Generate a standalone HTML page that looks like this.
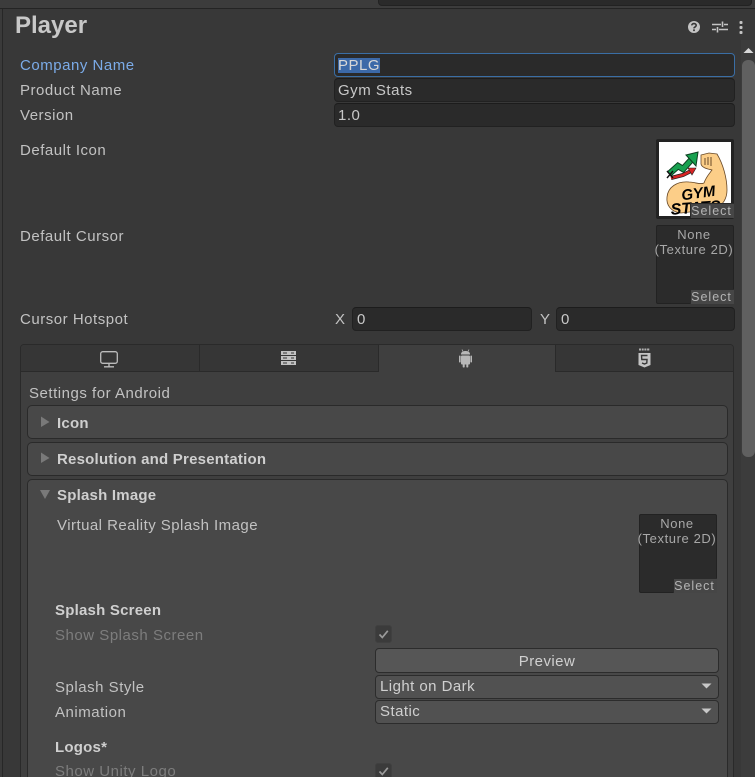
<!DOCTYPE html>
<html><head><meta charset="utf-8"><title>Player</title>
<style>
html,body{margin:0;padding:0;background:#383838}
#r{position:relative;width:755px;height:777px;overflow:hidden;background:#383838;font-family:"Liberation Sans",sans-serif;font-size:15px;letter-spacing:.52px;color:#c2c2c2}
#r div{position:absolute;box-sizing:border-box}
.t{white-space:nowrap;line-height:18px;height:18px}
.b{font-weight:bold;color:#cfcfcf;letter-spacing:.22px}
.f{background:#2a2a2a;border:1px solid #212121;border-top-color:#1c1c1c;border-radius:4px;height:24px;padding:3px 0 0 3px;line-height:18px;color:#c8c8c8}
.s{width:44px;height:15px;background:#464646;border-left:1px solid #2b2b2b;border-top:1px solid #2b2b2b;font-size:12.5px;line-height:14px;text-align:center;color:#b4b4b4;letter-spacing:1px;padding-right:2px}
.o{width:78px;height:79px;background:#2b2b2b;border:1px solid #222;border-radius:2px}
.n{color:#a8a8a8;font-size:13px;letter-spacing:.6px;text-align:center;line-height:15px;white-space:nowrap}
.fold{left:27px;width:701px;background:#484848;border:1px solid #2a2a2a;border-radius:5px}
.dd{left:375px;width:344px;height:24px;background:#515151;border:1px solid #2c2c2c;border-radius:4px;padding:2px 0 0 4px;line-height:18px;color:#d0d0d0;letter-spacing:.45px}
.cb{left:375px;width:17px;height:18px;background:#3b3b3b;border:1px solid #404040;border-radius:3px}
.dis{color:#7d7d7d}
</style></head>
<body><div id="r">
<!-- top strip -->
<div style="left:0;top:0;width:755px;height:9px;background:#3c3c3c;border-bottom:1px solid #242424"></div>
<div style="left:378px;top:-6px;width:374px;height:12px;background:#2a2a2a;border:1px solid #222;border-radius:4px"></div>
<div style="left:0;top:9px;width:2px;height:768px;background:#3a3a3a"></div>
<div style="left:2px;top:9px;width:1px;height:768px;background:#272727"></div>
<!-- scrollbar -->
<div style="left:741px;top:40px;width:14px;height:737px;background:#3c3c3c"></div>
<div style="left:742px;top:60px;width:13px;height:397px;background:#606060;border-radius:6px"></div>
<svg style="position:absolute;left:743px;top:47px" width="12" height="7"><path d="M0.500 6L5.500 1L10.500 6Z" fill="#d8d8d8"/></svg>
<!-- header -->
<div class="t" style="left:15px;top:13px;font-size:24px;line-height:26px;height:26px;font-weight:bold;color:#c8c8c8;letter-spacing:0">Player</div>
<svg style="position:absolute;left:686px;top:19px" width="64" height="16">
<circle cx="8" cy="8" r="6" fill="#c4c4c4"/>
<path d="M5.800 6.400C5.800 4 10.200 4 10.200 6.400C10.200 8 8 7.800 8 9.400" stroke="#383838" stroke-width="1.600" fill="none"/><rect x="7.100" y="10.400" width="1.800" height="1.700" fill="#383838"/>
<path d="M26 5.500H35M38 5.500H42M26 10.500H30M33 10.500H42" stroke="#c4c4c4" stroke-width="1.400"/>
<path d="M36.500 2.500V8M31.500 8V13.500" stroke="#c4c4c4" stroke-width="1.600"/>
<rect x="53.500" y="2" width="3" height="3" rx="1" fill="#c4c4c4"/><rect x="53.500" y="7" width="3" height="3" rx="1" fill="#c4c4c4"/><rect x="53.500" y="12" width="3" height="3" rx="1" fill="#c4c4c4"/>
</svg>
<!-- fields -->
<div class="t" style="left:20px;top:57px;color:#7babe8">Company Name</div>
<div class="t" style="left:20px;top:82px">Product Name</div>
<div class="t" style="left:20px;top:107px">Version</div>
<div class="f" style="left:334px;top:53px;width:401px;border:1px solid #3a6ea5"><span style="background:#3c69a8;color:#d8d8d8;display:inline-block;height:15px;line-height:15px">PPLG</span></div>
<div class="f" style="left:334px;top:78px;width:401px">Gym Stats</div>
<div class="f" style="left:334px;top:103px;width:401px">1.0</div>
<div class="t" style="left:20px;top:142px">Default Icon</div>
<div class="t" style="left:20px;top:228px">Default Cursor</div>
<!-- icon -->
<div class="o" style="left:656px;top:139px;height:80px;background:#222"></div>
<svg style="position:absolute;left:659px;top:142px" width="72" height="74" viewBox="0 0 72 74">
<rect width="72" height="74" fill="#fff"/>
<path d="M42 13L50 11L58 12C64 22 68 36 68 48C68 57 64 63 56 67L22 71C12 70 7 63 8 55C9 45 18 39 30 40C36 40 41 43 45 41C47 35 50 32 53 28C49 27 43 26 42 22Z" fill="#fcce88" stroke="#6a4a28" stroke-width=".8"/>
<path d="M46 16V23M49 15V23M52 15V24" stroke="#5a3d20" stroke-width=".9"/>
<path d="M10 32L19 24L24 27L33 17" stroke="#0c3f20" stroke-width="6.500" fill="none"/>
<path d="M10 32L19 24L24 27L33 17" stroke="#18a150" stroke-width="4.500" fill="none"/>
<path d="M27 13L39 10L37 24Z" fill="#18a150" stroke="#0c3f20" stroke-width="1"/>
<path d="M12 36L24 33L32 29" stroke="#222" stroke-width="4" fill="none"/>
<path d="M12 36L24 33L32 29" stroke="#d82424" stroke-width="2.600" fill="none"/>
<path d="M29 26L37 26L33 33Z" fill="#d82424" stroke="#222" stroke-width=".6"/>
<path d="M8 29L14 36M14 29L8 36" stroke="#111" stroke-width="1.400"/>
<text x="40" y="56" text-anchor="middle" font-family="Liberation Sans,sans-serif" font-size="15" font-weight="bold" font-style="italic" fill="#000" letter-spacing="0" transform="rotate(-8 40 56)">GYM</text>
<text x="37" y="71" text-anchor="middle" font-family="Liberation Sans,sans-serif" font-size="16" font-weight="bold" font-style="italic" fill="#000" letter-spacing="0" transform="rotate(-4 37 71)">STATS</text>
</svg>
<div class="s" style="left:690px;top:203px">Select</div>
<!-- cursor -->
<div class="o" style="left:656px;top:225px"></div>
<div class="n" style="left:653px;top:227px;width:82px">None<br>(Texture 2D)</div>
<div class="s" style="left:690px;top:289px">Select</div>
<!-- hotspot -->
<div class="t" style="left:20px;top:311px">Cursor Hotspot</div>
<div class="t" style="left:335px;top:311px">X</div>
<div class="f" style="left:352px;top:307px;width:180px;padding-left:4px">0</div>
<div class="t" style="left:540px;top:311px">Y</div>
<div class="f" style="left:556px;top:307px;width:179px;padding-left:4px">0</div>
<!-- tab box -->
<div style="left:20px;top:344px;width:714px;height:440px;background:#3f3f3f;border:1px solid #2a2a2a;border-radius:4px 4px 0 0"></div>
<div style="left:21px;top:345px;width:179px;height:27px;background:#363636;border-bottom:1px solid #2a2a2a;border-right:1px solid #2a2a2a;border-radius:3px 0 0 0"></div>
<div style="left:200px;top:345px;width:179px;height:27px;background:#363636;border-bottom:1px solid #2a2a2a;border-right:1px solid #2a2a2a"></div>
<div style="left:555px;top:345px;width:178px;height:27px;background:#363636;border-bottom:1px solid #2a2a2a;border-left:1px solid #2a2a2a;border-radius:0 3px 0 0"></div>
<svg style="position:absolute;left:0;top:344px" width="755" height="28">
<rect x="100.700" y="7.700" width="16.600" height="11.600" rx="2" fill="none" stroke="#bcbcbc" stroke-width="1.300"/>
<path d="M109 19.500V22.500M104 22.800H114" stroke="#bcbcbc" stroke-width="1.400"/>
<g fill="#c2c2c2"><rect x="281" y="7" width="15" height="4"/><rect x="281" y="12" width="15" height="4"/><rect x="281" y="17" width="15" height="4"/></g>
<g fill="#363636"><rect x="283" y="8.500" width="4" height="1"/><rect x="291" y="8.500" width="3" height="1"/><rect x="283" y="13.500" width="4" height="1"/><rect x="291" y="13.500" width="3" height="1"/><rect x="283" y="18.500" width="4" height="1"/><rect x="291" y="18.500" width="3" height="1"/></g>
<g fill="#b8b8b8"><path d="M461 10C461 6 470 6 470 10V10.500H461Z"/><rect x="461" y="11.500" width="9" height="9" rx="1"/><rect x="459" y="11.500" width="1.600" height="7" rx=".8"/><rect x="470.400" y="11.500" width="1.600" height="7" rx=".8"/><rect x="462.700" y="20" width="2" height="3.500" rx=".8"/><rect x="466.300" y="20" width="2" height="3.500" rx=".8"/></g>
<path d="M462 5.500L463 7.500M469 5.500L468 7.500" stroke="#b8b8b8" stroke-width=".8"/>
<path d="M638.500 9H650.500V21L644.500 23.500L638.500 21Z" fill="#c4c4c4"/>
<path d="M647.500 11.500H641.500L641.800 15.500H647L646.800 19L644.500 20L642 19" fill="none" stroke="#363636" stroke-width="1.400"/>
<path d="M639 5.500H650" stroke="#b0b0b0" stroke-width="2" stroke-dasharray="2 .7"/>
</svg>
<div class="t" style="left:29px;top:385px">Settings for Android</div>
<!-- foldouts -->
<div class="fold" style="top:405px;height:34px"></div>
<div class="fold" style="top:442px;height:34px"></div>
<div class="fold" style="top:479px;height:310px"></div>
<svg style="position:absolute;left:38px;top:414px" width="16" height="90">
<path d="M3 2.500L11.500 8L3 13Z" fill="#797979"/><path d="M3 38.500L11.500 44L3 49Z" fill="#797979"/><path d="M2 76H12L7 85Z" fill="#797979"/>
</svg>
<div class="t b" style="left:57px;top:415px">Icon</div>
<div class="t b" style="left:57px;top:451px">Resolution and Presentation</div>
<div class="t b" style="left:57px;top:487px">Splash Image</div>
<div class="t" style="left:57px;top:517px;letter-spacing:.46px">Virtual Reality Splash Image</div>
<div class="o" style="left:639px;top:514px"></div>
<div class="n" style="left:636px;top:516px;width:82px">None<br>(Texture 2D)</div>
<div class="s" style="left:673px;top:578px">Select</div>
<div class="t b" style="left:55px;top:602px">Splash Screen</div>
<div class="t dis" style="left:55px;top:627px">Show Splash Screen</div>
<div class="cb" style="top:625px"></div>
<svg style="position:absolute;left:375px;top:625px" width="17" height="18"><path d="M4.500 9.500L7.300 12.500L12.800 5.800" fill="none" stroke="#9a9a9a" stroke-width="1.700"/></svg>
<div class="dd" style="top:648px;height:25px;padding:4px 0 0;text-align:center;background:#565656">Preview</div>
<div class="t" style="left:55px;top:679px">Splash Style</div>
<div class="dd" style="top:675px">Light on Dark</div>
<div class="t" style="left:55px;top:704px">Animation</div>
<div class="dd" style="top:700px">Static</div>
<svg style="position:absolute;left:700px;top:680px" width="14" height="36"><path d="M1.500 3.500H11.500L6.500 8.500Z" fill="#c8c8c8"/><path d="M1.500 28.500H11.500L6.500 33.500Z" fill="#c8c8c8"/></svg>
<div class="t b" style="left:55px;top:739px">Logos*</div>
<div class="t dis" style="left:55px;top:763px">Show Unity Logo</div>
<div class="cb" style="top:763px"></div>
<svg style="position:absolute;left:375px;top:763px" width="17" height="14"><path d="M4.500 8.500L7.300 11.500L12.800 4.800" fill="none" stroke="#9a9a9a" stroke-width="1.700"/></svg>
</div></body></html>
